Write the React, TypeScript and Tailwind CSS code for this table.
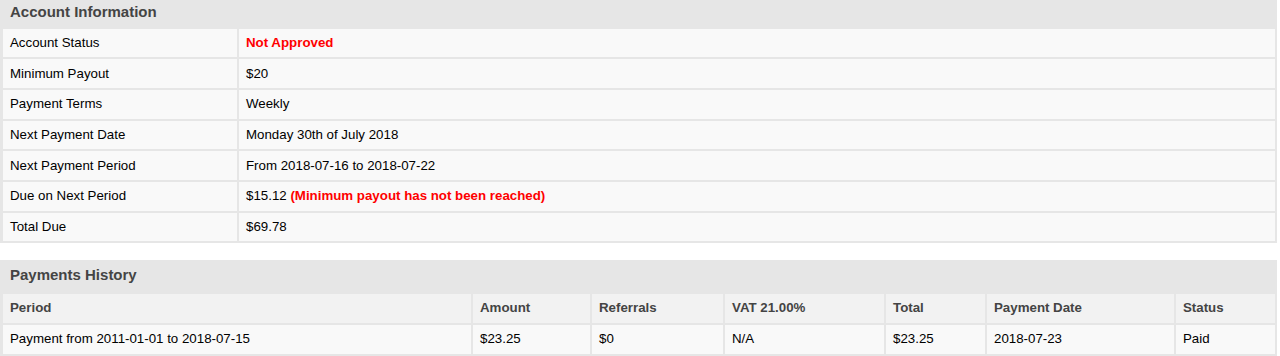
import React from "react";

const infoRows: { label: string; value: React.ReactNode }[] = [
  { label: "Account Status", value: <span className="font-bold text-[#ff0000]">Not Approved</span> },
  { label: "Minimum Payout", value: "$20" },
  { label: "Payment Terms", value: "Weekly" },
  { label: "Next Payment Date", value: "Monday 30th of July 2018" },
  { label: "Next Payment Period", value: "From 2018-07-16 to 2018-07-22" },
  {
    label: "Due on Next Period",
    value: (
      <>
        $15.12 <span className="font-bold text-[#ff0000]">(Minimum payout has not been reached)</span>
      </>
    ),
  },
  { label: "Total Due", value: "$69.78" },
];

const headers = ["Period", "Amount", "Referrals", "VAT 21.00%", "Total", "Payment Date", "Status"];
const row = ["Payment from 2011-01-01 to 2018-07-15", "$23.25", "$0", "N/A", "$23.25", "2018-07-23", "Paid"];

export default function App() {
  return (
    <div
      className="w-[1277px] bg-white text-[13.3px] text-black"
      style={{ fontFamily: '"Liberation Sans", Arial, sans-serif' }}
    >
      <div className="bg-[#e6e6e6] pl-[3px] pr-[2px] pb-[2px]">
        <div className="h-[28.5px] pl-[7px] pt-[3px] text-[15px] font-bold leading-[18px] text-[#444]">
          Account Information
        </div>
        <div className="grid grid-cols-[234px_1fr] gap-[2px]">
          {infoRows.map((r) => (
            <React.Fragment key={r.label}>
              <div className="flex h-[28.7px] items-center bg-[#f9f9f9] px-[7px]">{r.label}</div>
              <div className="flex h-[28.7px] items-center bg-[#f9f9f9] px-[7px]">
                <span>{r.value}</span>
              </div>
            </React.Fragment>
          ))}
        </div>
      </div>

      <div className="mt-[16.5px] bg-[#e6e6e6] pl-[3px] pr-[2px] pb-[2px]">
        <div className="h-[34px] pl-[7px] pt-[6px] text-[15px] font-bold leading-[18px] text-[#444]">
          Payments History
        </div>
        <div className="grid grid-cols-[468px_117px_131px_159px_99px_187px_1fr] gap-[2px]">
          {headers.map((h) => (
            <div key={h} className="flex h-[29px] items-center bg-[#f2f2f2] px-[7px] font-bold text-[#444]">
              {h}
            </div>
          ))}
          {row.map((c, i) => (
            <div key={i} className="flex h-[29px] items-center bg-[#f9f9f9] px-[7px]">
              {c}
            </div>
          ))}
        </div>
      </div>
    </div>
  );
}
